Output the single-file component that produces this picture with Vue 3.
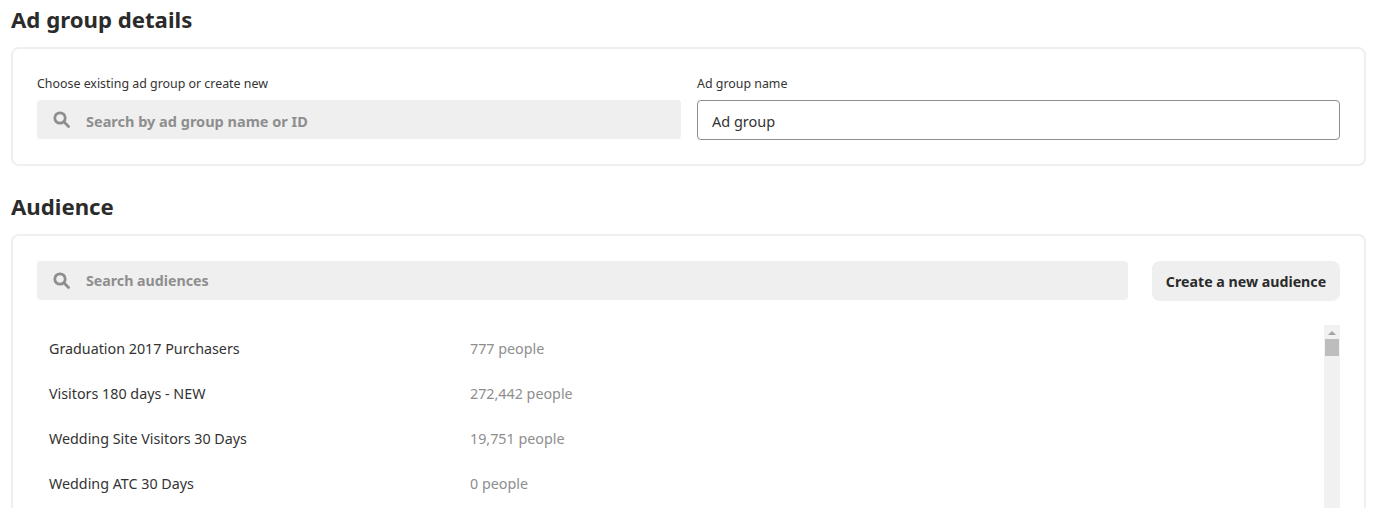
<script setup>
const audiences = [
  { name: "Graduation 2017 Purchasers", size: "777 people" },
  { name: "Visitors 180 days - NEW", size: "272,442 people" },
  { name: "Wedding Site Visitors 30 Days", size: "19,751 people" },
  { name: "Wedding ATC 30 Days", size: "0 people" }
]
</script>

<template>
  <div class="page">
    <h2>Ad group details</h2>
    <section class="card details">
      <div class="field">
        <label>Choose existing ad group or create new</label>
        <div class="search">
          <svg class="icon" viewBox="0 0 16 16">
            <circle cx="6.6" cy="6.6" r="4.9" />
            <path d="M10.2 10.2 14.6 14.6" />
          </svg>
          <span class="low">Search by ad group name or ID</span>
        </div>
      </div>
      <div class="field">
        <label>Ad group name</label>
        <div class="input"><span class="low">Ad group</span></div>
      </div>
    </section>

    <h2 class="second">Audience</h2>
    <section class="card audience">
      <div class="toolbar">
        <div class="search grow">
          <svg class="icon" viewBox="0 0 16 16">
            <circle cx="6.6" cy="6.6" r="4.9" />
            <path d="M10.2 10.2 14.6 14.6" />
          </svg>
          <span class="tight">Search audiences</span>
        </div>
        <button>Create a new audience</button>
      </div>
      <div class="list">
        <div class="rows">
          <div class="row" v-for="item in audiences" :key="item.name">
            <span class="name">{{ item.name }}</span>
            <span class="size">{{ item.size }}</span>
          </div>
        </div>
        <div class="scrollbar">
          <div class="arrow"></div>
          <div class="thumb"></div>
        </div>
      </div>
    </section>
  </div>
</template>

<style>
html, body {
  background: #fff;
  overflow: hidden;
}
</style>

<style scoped>
.page {
  width: 1355px;
  height: 508px;
  overflow: hidden;
  padding-left: 11px;
  font-family: "Noto Sans", "Open Sans", sans-serif;
  color: #333;
}
h2 {
  margin: 0;
  height: 47px;
  padding-top: 5px;
  box-sizing: border-box;
  font-size: 22.2px;
  line-height: 30px;
  font-weight: 700;
  color: #2b2b2b;
}
h2.second {
  margin-top: 22px;
  height: 46px;
  padding-top: 4px;
}
.card {
  border: 2px solid #efefef;
  border-radius: 8px;
  box-sizing: border-box;
  padding: 0 24px;
}
.details {
  height: 119px;
  display: grid;
  grid-template-columns: 644px 643px;
  column-gap: 16px;
  padding-top: 25px;
}
label {
  display: block;
  height: 26px;
  font-size: 12.4px;
  line-height: 20px;
  color: #333;
}
.search {
  height: 39px;
  background: #efefef;
  border-radius: 4px;
  display: flex;
  align-items: center;
  padding-left: 16px;
  font-size: 14.5px;
  font-weight: 700;
  color: #8e8e8e;
}
.low {
  padding-top: 2px;
}
.tight {
  font-size: 14.2px;
}
.icon {
  width: 17px;
  height: 17px;
  margin-right: 16px;
  fill: none;
  stroke: #8e8e8e;
  stroke-width: 2.6;
  stroke-linecap: round;
}
.input {
  height: 40px;
  box-sizing: border-box;
  border: 1px solid #8e8e8e;
  border-radius: 4px;
  display: flex;
  align-items: center;
  padding-left: 14px;
  font-size: 14.5px;
  color: #333;
}
.audience {
  height: 300px;
  padding-top: 24px;
}
.toolbar {
  display: flex;
  gap: 24px;
  padding-top: 1px;
}
.grow {
  flex: 1;
}
button {
  width: 188px;
  height: 40px;
  border: 0;
  border-radius: 8px;
  background: #efefef;
  font: 700 14.2px "Noto Sans", "Open Sans", sans-serif;
  color: #2b2b2b;
  padding: 0;
}
.list {
  display: flex;
  margin-top: 24px;
}
.rows {
  flex: 1;
  padding: 1px 0 0 12px;
}
.row {
  height: 45px;
  display: flex;
  align-items: center;
  font-size: 14.3px;
}
.name {
  width: 421px;
}
.size {
  color: #8e8e8e;
}
.scrollbar {
  width: 16px;
  height: 200px;
  background: #f1f1f1;
}
.arrow {
  width: 0;
  height: 0;
  margin: 6px auto 4px;
  border-left: 4px solid transparent;
  border-right: 4px solid transparent;
  border-bottom: 4px solid #a3a3a3;
}
.thumb {
  width: 14px;
  height: 17px;
  margin: 0 auto;
  background: #bdbdbd;
}
</style>
